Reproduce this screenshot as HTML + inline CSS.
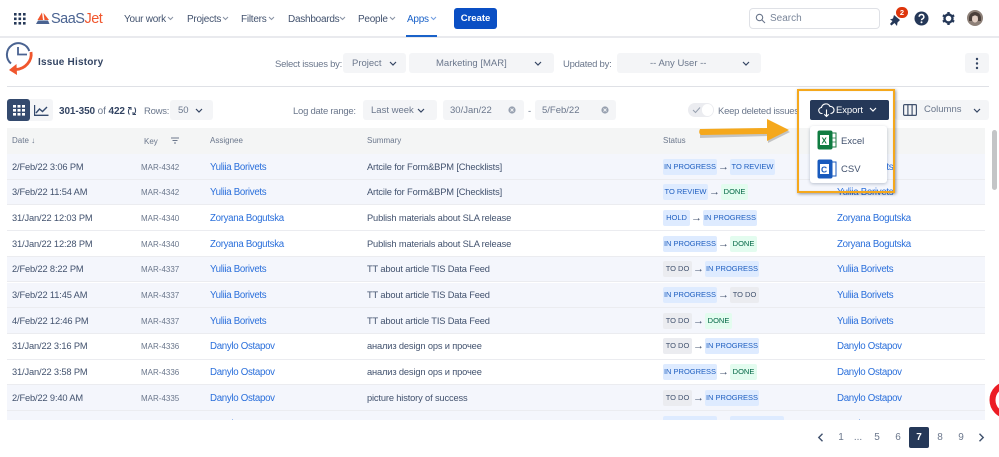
<!DOCTYPE html>
<html><head><meta charset="utf-8"><style>
*{box-sizing:border-box}
html{background:#fff}
html,body{margin:0;padding:0}
body{width:999px;height:457px;position:relative;overflow:hidden;background:#fff;font-family:"Liberation Sans",sans-serif;color:#344563;font-size:9.5px;filter:blur(.3px)}
.a{position:absolute;white-space:nowrap}
.nav{top:13px;line-height:13px;font-size:10px;letter-spacing:-.25px;color:#42526e}
.sel{position:absolute;height:20px;background:#f4f5f7;border-radius:3px;color:#6b778c;line-height:22px;font-size:9.5px;white-space:nowrap}
.sel svg{position:absolute}
.lab{color:#6b778c;font-size:9.5px;line-height:13px;letter-spacing:-.25px}
.row{position:absolute;left:0;width:978px;height:25.7px;border-bottom:1.5px solid #ebecf0;background:#f4f6fc}
.w{background:#fff}
.row span{position:absolute;white-space:nowrap;line-height:13px;top:6.6px}
.d{left:5px;color:#42526e;font-size:9.3px;letter-spacing:-.15px}
.k{left:134px;color:#6b778c;font-size:8px}
.n{left:203px;color:#2a6fdb;font-size:9.7px;letter-spacing:-.3px}
.s{left:360px;color:#42526e;font-size:9.3px;letter-spacing:-.15px}
.u{left:830px;color:#2a6fdb;font-size:9.7px;letter-spacing:-.3px}
.row .st{left:656px;top:4.6px;display:flex;align-items:center;height:16px}
.t{display:block;height:16px;line-height:16px;font-size:7.5px;text-align:center;border-radius:2px;font-style:normal}
.ip{width:54px;background:#deebff;color:#1f5fc0}
.tr{width:45px;background:#deebff;color:#1f5fc0}
.td{width:29px;background:#ebecf0;color:#42526e}
.dn{width:27px;background:#e3fcef;color:#006644}
.hd{width:27px;background:#deebff;color:#1f5fc0}
.ar{display:block;width:13px;text-align:center;color:#42526e;font-size:11px;line-height:16px}
.h{position:absolute;top:7px;color:#6b778c;font-size:8px;line-height:12px;white-space:nowrap}
.pg{position:absolute;top:431px;color:#6b778c;font-size:10px;line-height:13px;width:20px;text-align:center}
</style></head><body>

<!-- top bar -->
<div class="a" style="left:0;top:36px;width:999px;height:2px;background:#e9eaee"></div>
<svg class="a" style="left:14px;top:13px" width="12" height="12" fill="#253858"><rect x="0" y="0" width="2.6" height="2.6"/><rect x="4.5" y="0" width="2.6" height="2.6"/><rect x="9" y="0" width="2.6" height="2.6"/><rect x="0" y="4.5" width="2.6" height="2.6"/><rect x="4.5" y="4.5" width="2.6" height="2.6"/><rect x="9" y="4.5" width="2.6" height="2.6"/><rect x="0" y="9" width="2.6" height="2.6"/><rect x="4.5" y="9" width="2.6" height="2.6"/><rect x="9" y="9" width="2.6" height="2.6"/></svg>
<svg class="a" style="left:35px;top:12px" width="15" height="13"><path d="M7 0.5 L2.5 8 L8 8 Z M8.5 1 L14 8 L9.5 8 Z" fill="#f0562d"/><path d="M1 12 L3 8.5 L9 8.5 L13 8.5 L14.5 12 Z" fill="#4a6391"/></svg>
<div class="a" style="left:51px;top:10px;font-size:14.5px;line-height:18px;letter-spacing:-.5px;color:#4a6391">SaaS<span style="color:#f0562d">Jet</span></div>

<div class="a nav" style="left:124px">Your work</div>
<div class="a nav" style="left:187px">Projects</div>
<div class="a nav" style="left:241px">Filters</div>
<div class="a nav" style="left:288px">Dashboards</div>
<div class="a nav" style="left:358px">People</div>
<div class="a nav" style="left:407px;color:#1a62c9">Apps</div>
<svg class="a" style="left:0;top:0" width="445" height="30" fill="none" stroke="#8993a4" stroke-width="1"><path d="M168 17l2.500 2.500 2.500-2.500M223 17l2.500 2.500 2.500-2.500M269 17l2.500 2.500 2.500-2.500M340 17l2.500 2.500 2.500-2.500M390 17l2.500 2.500 2.500-2.500"/><path stroke="#6f9ce0" d="M431 17l2.500 2.500 2.500-2.500"/></svg>
<div class="a" style="left:406px;top:35px;width:31px;height:2px;background:#1a62c9"></div>
<div class="a" style="left:454px;top:8px;width:43px;height:21px;background:#0a4fc4;border-radius:3px;color:#fff;font-size:9.500px;font-weight:bold;line-height:21px;text-align:center">Create</div>

<div class="a" style="left:749px;top:8px;width:131px;height:21px;border:1px solid #dfe1e6;border-radius:4px;background:#fff"></div>
<svg class="a" style="left:755px;top:13px" width="11" height="11" fill="none" stroke="#6b778c" stroke-width="1.1"><circle cx="4.500" cy="4.500" r="3.200"/><path d="M7 7l3 3"/></svg>
<div class="a" style="left:770px;top:12px;font-size:10px;line-height:14px;color:#7a869a">Search</div>
<svg class="a" style="left:889px;top:14px" width="14" height="14" fill="#253858"><path d="M5 1 L11 6 L8.500 8.500 L8 12 L5.500 9 L2.500 11.500 L1 10 L3.500 7 L1 5.500 L4 4.500 Z"/></svg>
<div class="a" style="left:896px;top:7px;width:12px;height:11px;border-radius:6px;background:#de350b;color:#fff;font-size:7.500px;font-weight:bold;line-height:11px;text-align:center">2</div>
<svg class="a" style="left:914px;top:11px" width="15" height="15"><circle cx="7.500" cy="7.500" r="7" fill="#253858"/><path d="M5.200 5.800a2.300 2.300 0 1 1 3.400 2c-.8.4-1.100.8-1.100 1.500" fill="none" stroke="#fff" stroke-width="1.500"/><circle cx="7.500" cy="11.300" r="1" fill="#fff"/></svg>
<svg class="a" style="left:941px;top:11px" width="15" height="15" fill="none"><circle cx="7.500" cy="7.500" r="4" stroke="#253858" stroke-width="2.400"/><path d="M7.500 1v2.500M7.500 11.500V14M1.900 4.300l2.100 1.200M11 9.500l2.100 1.200M1.900 10.700L4 9.500M11 5.500l2.100-1.200" stroke="#253858" stroke-width="2.400"/></svg>
<svg class="a" style="left:967px;top:10px" width="16" height="16"><circle cx="8" cy="8" r="8" fill="#8d8078"/><path d="M2 8a6 6 0 0 1 12 0v3H11V6H5v5H2z" fill="#4a3f3a"/><ellipse cx="8" cy="9" rx="3" ry="3.600" fill="#e3cfc4"/></svg>

<!-- header row 2 -->
<svg class="a" style="left:5px;top:41px" width="30" height="35" fill="none"><path d="M6 22.500A11.500 11.500 0 1 1 24.300 10" stroke="#4a6391" stroke-width="2"/><path d="M13 6v7.500h9" stroke="#4a6391" stroke-width="1.800"/><path d="M26 11c1.500 9-6 17-15 17.500" stroke="#f0562d" stroke-width="2.800"/><path d="M11.500 23L4 29l8 5z" fill="#f0562d"/></svg>
<div class="a" style="left:38px;top:56px;font-size:10px;font-weight:bold;line-height:13px;letter-spacing:.2px;color:#344563">Issue History</div>
<div class="a lab" style="left:275px;top:58px">Select issues by:</div>
<div class="sel" style="left:343px;top:53px;width:63px;padding-left:9px">Project<svg style="left:46px;top:8px" width="8" height="6" fill="none" stroke="#344563" stroke-width="1.200"><path d="M1 1l3 3 3-3"/></svg></div>
<div class="sel" style="left:409px;top:53px;width:145px;padding-left:27px">Marketing [MAR]<svg style="left:125px;top:8px" width="8" height="6" fill="none" stroke="#344563" stroke-width="1.200"><path d="M1 1l3 3 3-3"/></svg></div>
<div class="a lab" style="left:563px;top:58px">Updated by:</div>
<div class="sel" style="left:617px;top:53px;width:144px;padding-left:33px">-- Any User --<svg style="left:125px;top:8px" width="8" height="6" fill="none" stroke="#344563" stroke-width="1.200"><path d="M1 1l3 3 3-3"/></svg></div>
<div class="sel" style="left:965px;top:53px;width:24px"><svg style="left:10px;top:4px" width="4" height="13" fill="#344563"><circle cx="2" cy="2" r="1.200"/><circle cx="2" cy="6.500" r="1.200"/><circle cx="2" cy="11" r="1.200"/></svg></div>
<div class="a" style="left:7px;top:86px;width:982px;height:1px;background:#dfe1e6"></div>

<!-- toolbar -->
<div class="a" style="left:7px;top:99px;width:46px;height:22px;background:#f4f5f7;border-radius:3px"></div>
<div class="a" style="left:7px;top:99px;width:23px;height:22px;background:#344a6e;border-radius:3px"></div>
<svg class="a" style="left:13px;top:105px" width="12" height="11" fill="#fff"><rect x="0" y="0" width="3" height="2.600"/><rect x="4.500" y="0" width="3" height="2.600"/><rect x="9" y="0" width="3" height="2.600"/><rect x="0" y="4" width="3" height="2.600"/><rect x="4.500" y="4" width="3" height="2.600"/><rect x="9" y="4" width="3" height="2.600"/><rect x="0" y="8" width="3" height="2.600"/><rect x="4.500" y="8" width="3" height="2.600"/><rect x="9" y="8" width="3" height="2.600"/></svg>
<svg class="a" style="left:34px;top:105px" width="15" height="11" fill="none" stroke="#344a6e" stroke-width="1.400"><path d="M.5 0v10.300h14"/><path d="M2 8l3.500-4 3 2.500L13 2"/></svg>
<div class="a" style="left:59px;top:105px;font-size:10px;line-height:13px;color:#6b778c;letter-spacing:-.1px"><b style="color:#344563">301-350</b> of <b style="color:#344563">422</b></div>
<svg class="a" style="left:127px;top:106px" width="10" height="10" fill="none" stroke="#344563" stroke-width="1"><path d="M2.500 8.500C1 7 .8 3.500 3.500 1.500M7.500 1.500C9 3 9.200 6.500 6.500 8.500"/><path d="M1 1.500h3v2.500M9 8.500H6V6"/></svg>
<div class="a lab" style="left:144px;top:105px">Rows:</div>
<div class="sel" style="left:170px;top:100px;width:43px;padding-left:8px">50<svg style="left:25px;top:8px" width="8" height="6" fill="none" stroke="#344563" stroke-width="1.200"><path d="M1 1l3 3 3-3"/></svg></div>
<div class="a lab" style="left:293px;top:105px">Log date range:</div>
<div class="sel" style="left:363px;top:100px;width:74px;padding-left:8px">Last week<svg style="left:54px;top:8px" width="8" height="6" fill="none" stroke="#344563" stroke-width="1.200"><path d="M1 1l3 3 3-3"/></svg></div>
<div class="sel" style="left:443px;top:100px;width:81px;padding-left:7px">30/Jan/22<svg style="left:65px;top:6px" width="8" height="8"><circle cx="4" cy="4" r="3.600" fill="#97a0af"/><path d="M2.500 2.500l3 3M5.500 2.500l-3 3" stroke="#f4f5f7" stroke-width=".9"/></svg></div>
<div class="a lab" style="left:528px;top:105px">-</div>
<div class="sel" style="left:535px;top:100px;width:81px;padding-left:7px">5/Feb/22<svg style="left:66px;top:6px" width="8" height="8"><circle cx="4" cy="4" r="3.600" fill="#97a0af"/><path d="M2.500 2.500l3 3M5.500 2.500l-3 3" stroke="#f4f5f7" stroke-width=".9"/></svg></div>
<div class="a" style="left:688px;top:103px;width:26px;height:14px;border-radius:7px;background:#ebecf0"></div>
<div class="a" style="left:702px;top:104px;width:11px;height:12px;border-radius:6px;background:#fff"></div>
<svg class="a" style="left:692px;top:106px" width="9" height="8" fill="none" stroke="#97a0af" stroke-width="1"><path d="M1 4l2.500 2.500L8 1.500"/></svg>
<div class="a lab" style="left:718px;top:105px">Keep deleted issues</div>
<div class="a" style="left:810px;top:100px;width:79px;height:20px;background:#253858;border-radius:2px"></div>
<svg class="a" style="left:818px;top:103px" width="17" height="15" fill="none" stroke="#fff" stroke-width="1.100"><path d="M4.500 10.500H4a3 3 0 0 1-.5-6A4.500 4.500 0 0 1 12 3.500a3.500 3.500 0 0 1 1 7h-.5"/><path d="M8.500 6.500v7M6.300 11.300l2.200 2.200 2.200-2.200"/></svg>
<div class="a" style="left:836px;top:104px;color:#fff;font-size:9.500px;line-height:13px;letter-spacing:-.1px">Export</div>
<svg class="a" style="left:869px;top:107px" width="8" height="6" fill="none" stroke="#fff" stroke-width="1.200"><path d="M1 1l3 3 3-3"/></svg>
<div class="sel" style="left:895px;top:100px;width:94px;padding-left:29px;line-height:20px">Columns<svg style="left:78px;top:8px" width="8" height="6" fill="none" stroke="#344563" stroke-width="1.200"><path d="M1 1l3 3 3-3"/></svg><svg style="left:8px;top:4px" width="14" height="12" fill="none" stroke="#42526e" stroke-width="1.200"><rect x=".6" y=".6" width="12.800" height="10.800" rx="1"/><path d="M4.900 .6v10.800M9.100 .6v10.800"/></svg></div>

<!-- table -->
<div class="a" style="left:7px;top:128px;width:978px;height:292px;overflow:hidden">
<div style="position:absolute;left:0;top:0;width:978px;height:26px;background:#f4f5f5">
<div class="h" style="left:5px">Date ↓</div>
<div class="h" style="left:137px;top:8px">Key</div>
<svg style="position:absolute;left:164px;top:9px" width="8" height="7" fill="none" stroke="#6b778c" stroke-width=".9"><path d="M0 1h8M1.500 3.500h5M3 6h2"/></svg>
<div class="h" style="left:203px">Assignee</div>
<div class="h" style="left:360px">Summary</div>
<div class="h" style="left:656px">Status</div>
</div>
<div class="row" style="top:26px"><span class="d">2/Feb/22 3:06 PM</span><span class="k">MAR-4342</span><span class="n">Yuliia Borivets</span><span class="s">Artcile for Form&amp;BPM [Checklists]</span><span class="st"><i class="t ip">IN PROGRESS</i><b class="ar">→</b><i class="t tr">TO REVIEW</i></span><span class="u">Yuliia Borivets</span></div>
<div class="row" style="top:51.7px"><span class="d">3/Feb/22 11:54 AM</span><span class="k">MAR-4342</span><span class="n">Yuliia Borivets</span><span class="s">Artcile for Form&amp;BPM [Checklists]</span><span class="st"><i class="t tr">TO REVIEW</i><b class="ar">→</b><i class="t dn">DONE</i></span><span class="u">Yuliia Borivets</span></div>
<div class="row w" style="top:77.4px"><span class="d">31/Jan/22 12:03 PM</span><span class="k">MAR-4340</span><span class="n">Zoryana Bogutska</span><span class="s">Publish materials about SLA release</span><span class="st"><i class="t hd">HOLD</i><b class="ar">→</b><i class="t ip">IN PROGRESS</i></span><span class="u">Zoryana Bogutska</span></div>
<div class="row w" style="top:103.1px"><span class="d">31/Jan/22 12:28 PM</span><span class="k">MAR-4340</span><span class="n">Zoryana Bogutska</span><span class="s">Publish materials about SLA release</span><span class="st"><i class="t ip">IN PROGRESS</i><b class="ar">→</b><i class="t dn">DONE</i></span><span class="u">Zoryana Bogutska</span></div>
<div class="row" style="top:128.8px"><span class="d">2/Feb/22 8:22 PM</span><span class="k">MAR-4337</span><span class="n">Yuliia Borivets</span><span class="s">TT about article TIS Data Feed</span><span class="st"><i class="t td">TO DO</i><b class="ar">→</b><i class="t ip">IN PROGRESS</i></span><span class="u">Yuliia Borivets</span></div>
<div class="row" style="top:154.5px"><span class="d">3/Feb/22 11:45 AM</span><span class="k">MAR-4337</span><span class="n">Yuliia Borivets</span><span class="s">TT about article TIS Data Feed</span><span class="st"><i class="t ip">IN PROGRESS</i><b class="ar">→</b><i class="t td">TO DO</i></span><span class="u">Yuliia Borivets</span></div>
<div class="row" style="top:180.2px"><span class="d">4/Feb/22 12:46 PM</span><span class="k">MAR-4337</span><span class="n">Yuliia Borivets</span><span class="s">TT about article TIS Data Feed</span><span class="st"><i class="t td">TO DO</i><b class="ar">→</b><i class="t dn">DONE</i></span><span class="u">Yuliia Borivets</span></div>
<div class="row w" style="top:205.9px"><span class="d">31/Jan/22 3:16 PM</span><span class="k">MAR-4336</span><span class="n">Danylo Ostapov</span><span class="s">анализ design ops и прочее</span><span class="st"><i class="t td">TO DO</i><b class="ar">→</b><i class="t ip">IN PROGRESS</i></span><span class="u">Danylo Ostapov</span></div>
<div class="row w" style="top:231.6px"><span class="d">31/Jan/22 3:58 PM</span><span class="k">MAR-4336</span><span class="n">Danylo Ostapov</span><span class="s">анализ design ops и прочее</span><span class="st"><i class="t ip">IN PROGRESS</i><b class="ar">→</b><i class="t dn">DONE</i></span><span class="u">Danylo Ostapov</span></div>
<div class="row" style="top:257.3px"><span class="d">2/Feb/22 9:40 AM</span><span class="k">MAR-4335</span><span class="n">Danylo Ostapov</span><span class="s">picture history of success</span><span class="st"><i class="t td">TO DO</i><b class="ar">→</b><i class="t ip">IN PROGRESS</i></span><span class="u">Danylo Ostapov</span></div>
<div class="row" style="top:283px"><span class="d">3/Feb/22 1:00 PM</span><span class="k">MAR-4335</span><span class="n">Danylo Ostapov</span><span class="s">picture history of success</span><span class="st"><i class="t ip">IN PROGRESS</i><b class="ar">→</b><i class="t ip">IN PROGRESS</i></span><span class="u">Danylo Ostapov</span></div>
</div>
<div class="a" style="left:992px;top:130px;width:5px;height:60px;background:#c4c5c7;border-radius:3px"></div>

<!-- dropdown + annotation -->
<div class="a" style="left:810px;top:126px;width:77px;height:57px;background:#fff;border-radius:3px;box-shadow:0 1px 3px rgba(9,30,66,.25)"></div>
<svg class="a" style="left:817px;top:130px" width="20" height="20"><rect x="9" y="3" width="10" height="14" fill="#fff" stroke="#1d7a46"/><path d="M14 3v14M9 8h10M9 12h10" stroke="#1d7a46" stroke-width=".8"/><rect x="0.500" y="0.500" width="15" height="19" rx="2" fill="#107c41"/><rect x="3" y="5" width="9" height="10" fill="#fff"/><text x="4.500" y="13.500" font-size="8" font-weight="bold" fill="#107c41" font-family="Liberation Sans">X</text></svg>
<div class="a" style="left:841px;top:135px;font-size:9.500px;line-height:13px;color:#42526e">Excel</div>
<svg class="a" style="left:817px;top:159px" width="20" height="20"><rect x="9" y="3" width="10" height="14" fill="#fff" stroke="#185abd"/><rect x="0.500" y="0.500" width="15" height="19" rx="2" fill="#185abd"/><rect x="3" y="5" width="9" height="10" fill="#fff"/><text x="4" y="13.500" font-size="8.500" font-weight="bold" fill="#185abd" font-family="Liberation Sans">C</text></svg>
<div class="a" style="left:841px;top:163px;font-size:9.500px;line-height:13px;color:#42526e">CSV</div>
<div class="a" style="left:797px;top:89px;width:98px;height:104px;border:2.500px solid #f5a81c;box-shadow:1px 1px 3px rgba(0,0,0,.4),inset 0 0 1px rgba(0,0,0,.15)"></div>
<svg class="a" style="left:695px;top:115px" width="100" height="36"><path d="M5 16L5 23L73 21L73 28L95 17L73 6L73 15Z" fill="#000" opacity=".2"/><path d="M5 14Q3 18 6 20L72 19L72 26L94 15L72 4L72 13Z" fill="#f5a81c"/></svg>
<svg class="a" style="left:985px;top:378px" width="14" height="44" fill="none"><circle cx="23" cy="22" r="15.500" stroke="#ec1c24" stroke-width="6"/></svg>

<!-- pagination -->
<svg class="a" style="left:817px;top:433px" width="8" height="9" fill="none" stroke="#42526e" stroke-width="1.400"><path d="M5.500 .8L1.800 4.500l3.700 3.700"/></svg>
<div class="pg" style="left:831px">1</div>
<div class="pg" style="left:848px">...</div>
<div class="pg" style="left:867px">5</div>
<div class="pg" style="left:888px">6</div>
<div class="a" style="left:909px;top:427px;width:20px;height:21px;background:#253858;border-radius:2px;color:#fff;font-size:10px;font-weight:bold;line-height:21px;text-align:center">7</div>
<div class="pg" style="left:930px">8</div>
<div class="pg" style="left:951px">9</div>
<svg class="a" style="left:977px;top:433px" width="8" height="9" fill="none" stroke="#42526e" stroke-width="1.400"><path d="M2.500 .8l3.700 3.700-3.700 3.700"/></svg>
</body></html>
